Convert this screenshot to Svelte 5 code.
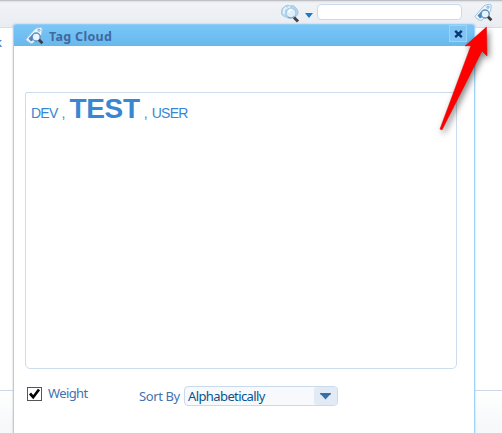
<script>
  let query = $state('');
  let weight = $state(true);
  const tags = [
    { name: 'DEV', heavy: false },
    { name: 'TEST', heavy: true },
    { name: 'USER', heavy: false },
  ];
</script>

{#snippet tagIcon()}
  <svg class="tag-icon" viewBox="0 0 20 20" width="20" height="20">
    <path d="M1.300 12.800 L9.800 3.200 Q11 2 12.500 1.800 L15.500 1.300 Q17.400 1.200 17.200 3 L16.600 8.500 L8 17 Q6.500 18 5 17 L1.600 14.600 Q.6 13.700 1.300 12.800Z" fill="#eaf4fc" stroke="#9fc3e4" />
    <circle cx="14" cy="4.200" r="1.100" fill="#fff" stroke="#5f96c8" stroke-width=".8" />
    <path d="M3.500 12.500 L8.500 7.300 L7 11 L8.200 14 L6 15.500Z" fill="#4f86b8" />
    <circle cx="11.200" cy="11" r="4" fill="#e6f5ff" stroke="#5f8fbb" stroke-width="1.300" />
    <path d="M14 13.800 L17.400 17.200" stroke="#3d3c42" stroke-width="2.800" />
  </svg>
{/snippet}

<div class="page">
  <header class="toolbar">
    <svg class="search" viewBox="0 0 20 20" width="20" height="20">
      <path d="M5.500 2 Q8 .5 10 2 Q14 .5 16 4 Q19.500 7 17.500 11 Q15 14 12 13.500 Q8 15 5 12.500 Q1 11.500 1.500 8 Q1 4 5.500 2Z" fill="#b9d8f0" stroke="#a3c7e6" />
      <path d="M6 3.500 Q3 5.500 4 10 M10 2.800 Q7 4 6.500 7" fill="none" stroke="#e9f5fd" stroke-width="1.600" />
      <circle cx="11" cy="9" r="5" fill="#dceffb" stroke="#a4c5e0" stroke-width="1.200" />
      <path d="M8.500 8.500 Q9.300 6 11.500 6" fill="none" stroke="#fff" stroke-width="1.500" />
      <path d="M8 13.300 Q11 15 14 12.800" fill="none" stroke="#8698ab" />
      <path d="M14 13.500 L18 17.500" stroke="#424249" stroke-width="3" />
    </svg>
    <svg class="caret" viewBox="0 0 8 5" width="8" height="5"><path d="M0 0H8L4 5Z" fill="#1c7bc9" /></svg>
    <input class="query" type="text" bind:value={query} />
    <span class="tag-button">{@render tagIcon()}</span>
  </header>
  <main class="content"><span class="link">k</span></main>
  <footer class="bottom"></footer>

  <section class="dialog">
    <div class="title">
      {@render tagIcon()}
      <h1>Tag Cloud</h1>
      <button class="close" aria-label="Close">
        <svg viewBox="0 0 9 8" width="9" height="8"><path d="M1.200 .8L7.800 7.200M7.800 .8L1.200 7.200" stroke="#083578" stroke-width="2.300" /></svg>
      </button>
    </div>
    <div class="cloud">
      {#each tags as tag, i}{#if i}<span class="comma">,</span>{/if}<span class="tag" class:heavy={tag.heavy}>{tag.name}</span>{/each}
    </div>
    <div class="controls">
      <button class="check" role="checkbox" aria-checked={weight} aria-label="Weight" onclick={() => (weight = !weight)}>
        {#if weight}<svg viewBox="0 0 13 12" width="13" height="12"><path d="M2 5.500L5.200 9.200L11 1.500" fill="none" stroke="#000" stroke-width="2.700" /></svg>{/if}
      </button>
      <span class="weight">Weight</span>
      <span class="sort">Sort By</span>
      <div class="select">
        <span class="value">Alphabetically</span>
        <span class="arrow"><svg viewBox="0 0 11 7" width="11" height="7"><path d="M0 .5H11L5.500 6.500Z" fill="#3672ad" /><path d="M0 .8H11" stroke="#24588e" /></svg></span>
      </div>
    </div>
  </section>

  <svg class="pointer" viewBox="0 0 502 150" width="502" height="150">
    <path d="M486.500 27L487 56L482 51L442 130L440 129L471 45.500L465 46Z" fill="#fe0000" stroke="#e00000" stroke-width=".5" />
  </svg>
</div>

<style>
  .page {
    position: relative;
    display: flex;
    flex-direction: column;
    width: 502px;
    height: 433px;
    overflow: hidden;
    background: #fff;
    font-family: "Noto Sans", sans-serif;
  }
  .toolbar {
    display: flex;
    align-items: flex-start;
    box-sizing: border-box;
    height: 28px;
    padding-left: 280px;
    border-top: 1px solid #bec0c5;
    border-bottom: 1px solid #d3dfec;
    background: linear-gradient(#dcdfe4 0, #f1f3f6 2px, #e9ecf1 100%);
  }
  .search { margin-top: 3px; }
  .caret { margin: 12px 0 0 5px; }
  .query {
    box-sizing: border-box;
    width: 145px;
    height: 16px;
    margin: 3px 0 0 4px;
    padding: 0 4px;
    border: 1px solid #cad9ed;
    border-radius: 4px;
    background: #fff;
    outline: 0;
  }
  .tag-button { margin: 2px 0 0 12px; height: 20px; }
  .tag-icon { display: block; flex: none; }
  .content { height: 362px; }
  .link {
    display: block;
    margin: 5px 0 0 -5px;
    color: #1874c4;
    font: 13px/18px "Noto Sans", sans-serif;
  }
  .bottom {
    flex: 1;
    border-top: 1px solid #ccd8e8;
    background: linear-gradient(#fff, #f6f8fa 35px);
  }
  .dialog {
    position: absolute;
    top: 24px;
    left: 13px;
    box-sizing: border-box;
    width: 462px;
    height: 409px;
    border: 1px solid #9ed4fa;
    border-width: 0 1px;
    border-radius: 2px 2px 0 0;
    background: #fff;
    box-shadow: 0 0 2px #b5c1cc;
  }
  .title {
    display: flex;
    align-items: flex-start;
    box-sizing: border-box;
    height: 22px;
    padding-left: 11px;
    border-top: 1px solid #92cdf5;
    border-radius: 2px 2px 0 0;
    background: linear-gradient(#79c6f7, #69b8ed);
  }
  .title .tag-icon { margin-top: 1px; }
  h1 {
    margin: 3px 0 0 4px;
    color: #4069a0;
    font: bold 12.5px/18px "Noto Sans", sans-serif;
    letter-spacing: 0.3px;
  }
  .close {
    display: flex;
    align-items: center;
    justify-content: center;
    box-sizing: border-box;
    width: 18px;
    height: 17px;
    margin: 0 7px 0 auto;
    padding: 0;
    border: 1px solid #9bd4fa;
    background: #7fc4f2;
  }
  .cloud {
    display: flex;
    align-items: baseline;
    box-sizing: border-box;
    width: 432px;
    height: 277px;
    margin: 46px 0 0 11px;
    padding-left: 5px;
    border: 1px solid #cddcec;
    border-radius: 2px 2px 5px 5px;
    color: #3787d2;
    font: 14px/31px "Liberation Sans", sans-serif;
  }
  .tag { letter-spacing: -0.75px; }
  .heavy { font-size: 28px; font-weight: bold; letter-spacing: -0.3px; }
  .comma { margin: 0 4px; }
  .controls {
    display: flex;
    align-items: flex-start;
    margin: 17px 0 0 13px;
    color: #4173b1;
    font-size: 13px;
    line-height: 18px;
  }
  .check {
    box-sizing: border-box;
    width: 15px;
    height: 14px;
    margin-top: 1px;
    padding: 0;
    border: 1px solid #555;
    background: #fff;
  }
  .check svg { display: block; }
  .weight { width: 91px; margin: -2px 0 0 6px; letter-spacing: -0.6px; }
  .sort { width: 45px; margin-top: 1px; letter-spacing: -0.4px; white-space: nowrap; }
  .select {
    display: flex;
    box-sizing: border-box;
    width: 154px;
    height: 20px;
    border: 1px solid #cbdaea;
    border-radius: 4px;
    background: #f7f9fd;
  }
  .value { flex: 1; padding-left: 3px; color: #07558e; letter-spacing: -0.6px; line-height: 19px; }
  .arrow {
    display: flex;
    align-items: center;
    justify-content: center;
    width: 23px;
    border-radius: 3px;
    background: #e2ebf5;
  }
  .pointer {
    position: absolute;
    top: 0;
    left: 0;
    pointer-events: none;
    filter: drop-shadow(2px 3px 3px rgba(0, 0, 0, 0.5));
  }
</style>
